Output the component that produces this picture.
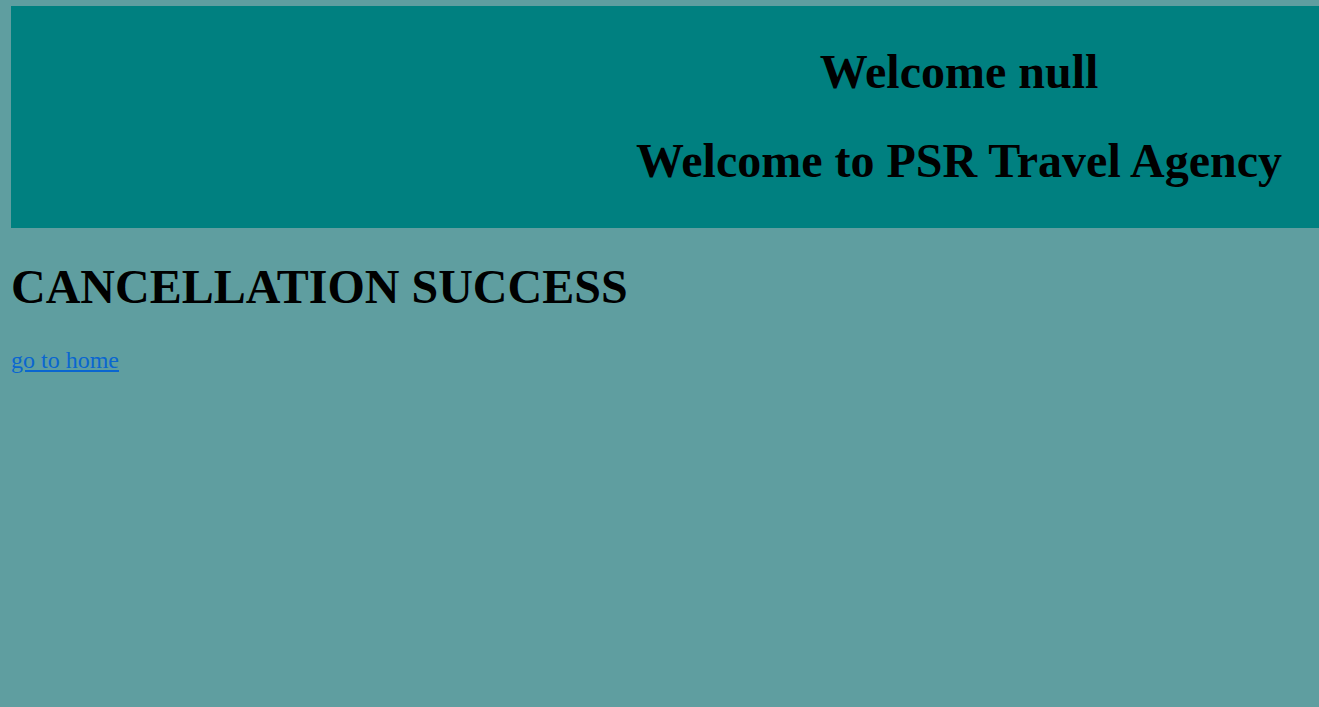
export default function App() {
  return (
    <div className="min-h-[707px] bg-[#5f9ea0] pt-[6px] pl-[11px] font-['Liberation_Serif','Times_New_Roman',serif] text-black">
      {/* Header banner */}
      <div className="bg-[#008080] pt-[7px] pb-[9px] pl-[588px] text-center">
        <h1 className="mt-[32px] text-[48px] font-bold leading-[53px]">Welcome null</h1>
        <h1 className="mt-[36px] mb-[32px] text-[48px] font-bold leading-[53px]">
          Welcome to PSR Travel Agency
        </h1>
      </div>

      <h1 className="mt-[32px] text-[48px] font-bold leading-[53px]">CANCELLATION SUCCESS</h1>
      <p className="mt-[34px] text-[24px] leading-[27px]">
        <a href="#" className="text-[#0a66d0] underline">
          go to home
        </a>
      </p>
    </div>
  )
}
